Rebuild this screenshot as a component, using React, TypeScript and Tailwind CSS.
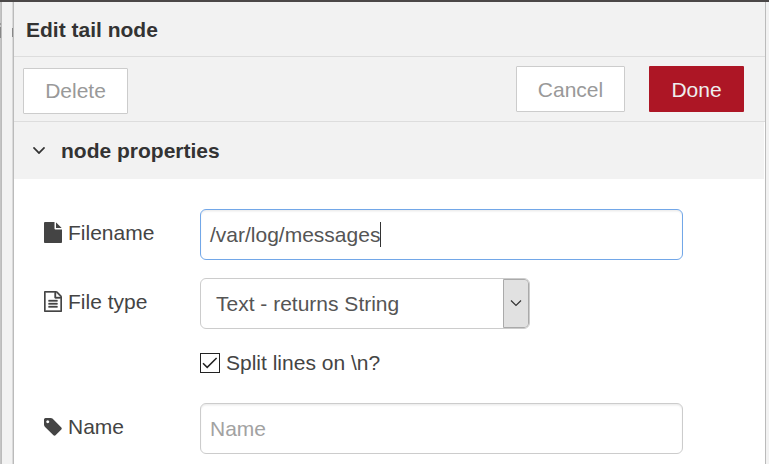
import React from "react";

type GlyphProps = { viewBox: string; d: string; className: string };

function Glyph({ viewBox, d, className }: GlyphProps) {
  return (
    <svg viewBox={viewBox} className={className} fill="currentColor" aria-hidden="true">
      <path d={d} />
    </svg>
  );
}

const ANGLE_DOWN =
  "M1395 736q0 13-10 23l-466 466q-10 10-23 10t-23-10l-466-466q-10-10-10-23t10-23l50-50q10-10 23-10t23 10l393 393 393-393q10-10 23-10t23 10l50 50q10 10 10 23z";
const FILE =
  "M1152 512v-472q22 14 36 28l408 408q14 14 28 36h-472zm-128 32q0 40 28 68t68 28h544v1056q0 40-28 68t-68 28h-1344q-40 0-68-28t-28-68v-1600q0-40 28-68t68-28h800v544z";
const FILE_TEXT =
  "M1596 380q28 28 48 76t20 88v1152q0 40-28 68t-68 28h-1344q-40 0-68-28t-28-68v-1600q0-40 28-68t68-28h896q40 0 88 20t76 48zm-444-244v376h376q-10-29-22-41l-313-313q-12-12-41-22zm384 1528v-1024h-416q-40 0-68-28t-28-68v-416h-768v1536h1280zm-1024-864q0-14 9-23t23-9h704q14 0 23 9t9 23v64q0 14-9 23t-23 9h-704q-14 0-23-9t-9-23v-64zm736 224q14 0 23 9t9 23v64q0 14-9 23t-23 9h-704q-14 0-23-9t-9-23v-64q0-14 9-23t23-9h704zm0 256q14 0 23 9t9 23v64q0 14-9 23t-23 9h-704q-14 0-23-9t-9-23v-64q0-14 9-23t23-9h704z";
const TAG =
  "M576 448q0-53-37.5-90.5t-90.5-37.5-90.5 37.5-37.5 90.5 37.5 90.5 90.5 37.5 90.5-37.5 37.5-90.5zm1067 576q0 53-37 90l-491 492q-39 37-91 37-53 0-90-37l-715-716q-38-37-64.5-101t-26.5-117v-416q0-52 38-90t90-38h416q53 0 117 26.5t102 64.5l715 714q37 39 37 91z";

function Label({ icon, children }: { icon: React.ReactNode; children: React.ReactNode }) {
  return (
    <div className="flex h-[47px] w-[156px] shrink-0 items-center gap-1.5">
      {icon}
      <span>{children}</span>
    </div>
  );
}

export default function App() {
  return (
    <div className="flex h-[464px] w-[769px] flex-col overflow-hidden bg-[#f2f2f2] font-['Liberation_Sans',Arial,sans-serif] text-[21px] leading-[30px] text-[#444]">
      <div className="h-0.5 shrink-0 bg-[#4b4848]" />
      <div className="flex min-h-0 flex-1">
        {/* Strip of the workspace and the separator beside the tray */}
        <div className="flex w-0.5 shrink-0 flex-col border-r border-[#bbb] bg-[#c4c4c4]">
          <div className="mt-[21px] h-0.5 bg-[#999]" />
          <div className="mt-0.5 h-[11px] bg-[#888]" />
        </div>
        <div className="w-2.5 shrink-0 bg-[#f2f2f2]" />
        <div className="w-0.5 shrink-0 border-r border-[#bbb] bg-[#dadada]">
          <div className="mt-[26px] h-[9px] bg-[#888]" />
        </div>

        <main className="flex w-[751px] shrink-0 flex-col bg-white">
          <header className="h-[55px] border-b border-[#ddd] bg-[#f2f2f2] pt-[13px] pl-3 font-bold text-[#333]">
            Edit tail node
          </header>

          <div className="flex h-[65px] border-b border-[#ddd] bg-[#f2f2f2] pt-[9px] pr-[21px] pl-[9px]">
            <button className="mt-0.5 h-[46px] w-[105px] rounded-[1px] border border-[#ccc] bg-white text-[#999]">
              Delete
            </button>
            <button className="ml-auto h-[46px] w-[109px] rounded-[1px] border border-[#ccc] bg-white pt-0.5 text-[#999]">
              Cancel
            </button>
            <button className="ml-6 h-[46px] w-[95px] rounded-[1px] bg-[#ad1625] pt-0.5 text-[#eee]">
              Done
            </button>
          </div>

          <div className="mr-px flex h-[57px] items-center bg-[#f2f2f2] pl-[19px] font-bold text-[#333]">
            <Glyph viewBox="397 653 998 582" d={ANGLE_DOWN} className="mr-4 h-[7px] w-3" />
            node properties
          </div>

          <form className="flex flex-col pt-[30px] pl-[30px] text-[#555]">
            <div className="flex">
              <Label icon={<Glyph viewBox="128 0 1536 1792" d={FILE} className="h-[21px] w-[18px] text-[#444]" />}>
                <span className="text-[#444]">Filename</span>
              </Label>
              <div className="flex h-[51px] w-[483px] items-center rounded-md border border-[#72a7e8] bg-white pl-[9px] shadow-[inset_0_1.5px_1.5px_rgba(0,0,0,0.075)]">
                <span>/var/log/messages</span>
                <span className="h-[25px] w-px bg-[#333]" />
              </div>
            </div>

            <div className="mt-[18px] flex">
              <Label
                icon={
                  <Glyph
                    viewBox="128 0 1536 1792"
                    d={FILE_TEXT}
                    className="h-[21px] w-[18px] stroke-[#444] stroke-[30px] text-[#444]"
                  />
                }
              >
                <span className="text-[#444]">File type</span>
              </Label>
              <div className="flex h-[51px] w-[330px] items-center overflow-hidden rounded-md border border-[#ccc] bg-white pl-[15px]">
                <span>Text - returns String</span>
                <span className="ml-auto flex h-full w-[26px] items-center justify-center rounded-r-[4px] border border-[#aaa] bg-[#e1e1e1]">
                  <svg viewBox="0 0 12 8" className="mr-px -mt-0.5 h-2 w-3" fill="none" stroke="#333" strokeWidth="1.2">
                    <path d="M1 1.5 6 6.5 11 1.5" />
                  </svg>
                </span>
              </div>
            </div>

            <div className="mt-[19px] ml-[156px] flex h-[30px] items-center gap-1.5 text-[#444]">
              <span className="flex size-5 items-center justify-center border border-[#222] bg-white">
                <svg viewBox="0 0 18 18" className="size-[18px]" fill="none" stroke="#222" strokeWidth="1.5">
                  <path d="m2 9.2 4.2 4.2L15.6 4" />
                </svg>
              </span>
              Split lines on \n?
            </div>

            <div className="mt-[25px] flex">
              <Label icon={<Glyph viewBox="128 128 1536 1536" d={TAG} className="size-[18px] text-[#444]" />}>
                <span className="text-[#444]">Name</span>
              </Label>
              <div className="flex h-[51px] w-[483px] items-center rounded-md border border-[#ccc] bg-white pl-[9px] text-[#a2a2a2] shadow-[inset_0_1.5px_1.5px_rgba(0,0,0,0.075)]">
                Name
              </div>
            </div>
          </form>
        </main>
        <div className="w-px shrink-0 bg-[#bbb]" />
      </div>
    </div>
  );
}
